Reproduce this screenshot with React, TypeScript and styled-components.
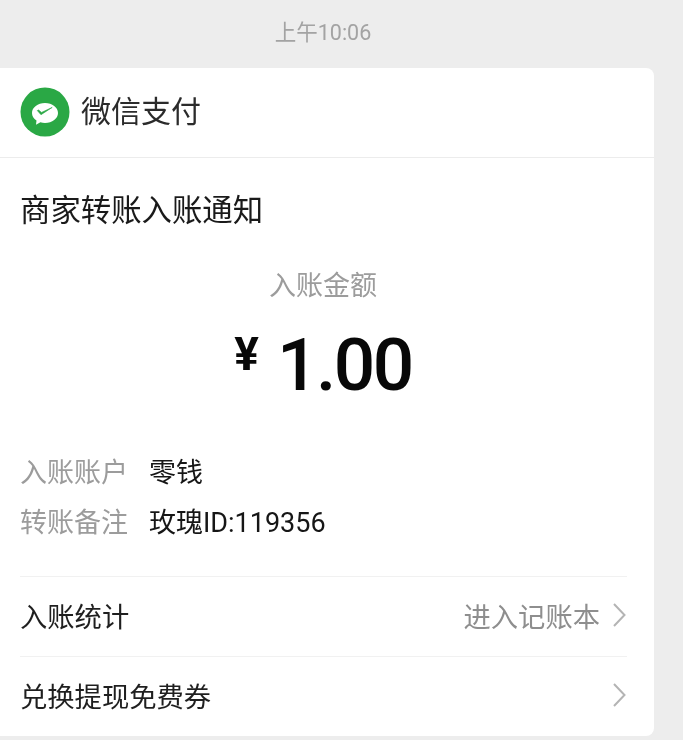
import React from "react";
import styled, { createGlobalStyle } from "styled-components";

const Global = createGlobalStyle`
  html, body { margin: 0; padding: 0; background: #ededed; }
  body { font-family: "Roboto", "Noto Sans CJK SC", sans-serif; overflow: hidden; }
`;

const Page = styled.div`
  width: 683px;
  height: 740px;
  background: #ededed;
  overflow: hidden;
  filter: blur(0.35px);
`;

const Time = styled.div`
  height: 68px;
  padding: 20px 37px 0 0;
  box-sizing: border-box;
  text-align: center;
  font-size: 21.5px;
  line-height: 26px;
  color: #a3a3a3;
`;

const Card = styled.div`
  width: 654px;
  height: 668px;
  background: #fff;
  border-radius: 0 8px 8px 0;
  display: flex;
  flex-direction: column;
`;

const Header = styled.div`
  height: 90px;
  box-sizing: border-box;
  display: flex;
  align-items: center;
  gap: 11px;
  padding: 0 0 2px 20px;
  border-bottom: 1px solid #ececec;
`;

const Brand = styled.span`
  font-size: 30px;
  line-height: 40px;
  color: #2b2b2b;
`;

const Body = styled.div`
  flex: 1;
  padding: 0 27px 0 20px;
  display: flex;
  flex-direction: column;
`;

const Title = styled.div`
  margin-top: 33px;
  font-size: 30.4px;
  line-height: 40px;
  color: #1a1a1a;
`;

const AmountLabel = styled.div`
  margin-top: 38px;
  padding-right: 1px;
  text-align: center;
  font-size: 27px;
  line-height: 34px;
  color: #9c9c9c;
`;

const Amount = styled.div`
  margin-top: 22px;
  padding-right: 1px;
  display: flex;
  justify-content: center;
  align-items: flex-start;
  height: 80px;
  color: #080808;
`;

const Currency = styled.span`
  font-size: 46px;
  line-height: 44px;
  font-weight: 700;
  margin: 7px 18px 0 0;
`;

const Value = styled.span`
  font-size: 73px;
  line-height: 80px;
  font-weight: 500;
  letter-spacing: -2.5px;
`;

const Details = styled.div`
  margin-top: 47px;
  display: flex;
  flex-direction: column;
  gap: 13px;
`;

const Detail = styled.div`
  display: flex;
  gap: 21px;
  height: 37px;
  align-items: center;
  font-size: 27px;
`;

const DetailLabel = styled.span`
  color: #9c9c9c;
`;

const DetailValue = styled.span`
  color: #161616;
`;

const Rows = styled.div`
  margin-top: 37px;
  display: flex;
  flex-direction: column;
`;

const Row = styled.div`
  height: 80px;
  box-sizing: border-box;
  padding-bottom: 3px;
  border-top: 1px solid #f1f1f1;
  display: flex;
  align-items: center;
  justify-content: space-between;
  font-size: 27.3px;
  color: #1f1f1f;
`;

const RowEnd = styled.span`
  display: flex;
  align-items: center;
  gap: 11px;
  color: #8e8e8e;
`;

const Logo = () => (
  <svg width="50" height="50" viewBox="0 0 50 50" aria-hidden="true">
    <circle cx="25" cy="25" r="24.5" fill="#2aa845" />
    <path
      d="M25 16c-7.200 0-13 4.500-13 10 0 3 1.700 5.700 4.500 7.500l-.5 4.300 4.400-2.600c1.400.5 3 .8 4.600.8 7.200 0 13-4.500 13-10S32.200 16 25 16z"
      fill="#fff"
    />
    <path d="M17.300 23.600l1.300-.6 2.900 2.400 10.700-5-11.200 7.300z" fill="#2aa845" stroke="#2aa845" strokeWidth="0.600" strokeLinejoin="round" />
  </svg>
);

const Chevron = () => (
  <svg width="16" height="26" viewBox="0 0 16 26" aria-hidden="true">
    <path d="M3 2l10.500 11L3 24" fill="none" stroke="#b4b4b4" strokeWidth="2" />
  </svg>
);

export default function App() {
  return (
    <Page>
      <Global />
      <Time>上午10:06</Time>
      <Card>
        <Header>
          <Logo />
          <Brand>微信支付</Brand>
        </Header>
        <Body>
          <Title>商家转账入账通知</Title>
          <AmountLabel>入账金额</AmountLabel>
          <Amount>
            <Currency>¥</Currency>
            <Value>1.00</Value>
          </Amount>
          <Details>
            <Detail>
              <DetailLabel>入账账户</DetailLabel>
              <DetailValue>零钱</DetailValue>
            </Detail>
            <Detail>
              <DetailLabel>转账备注</DetailLabel>
              <DetailValue>玫瑰ID:119356</DetailValue>
            </Detail>
          </Details>
          <Rows>
            <Row>
              <span>入账统计</span>
              <RowEnd>
                进入记账本
                <Chevron />
              </RowEnd>
            </Row>
            <Row>
              <span>兑换提现免费券</span>
              <RowEnd>
                <Chevron />
              </RowEnd>
            </Row>
          </Rows>
        </Body>
      </Card>
    </Page>
  );
}
